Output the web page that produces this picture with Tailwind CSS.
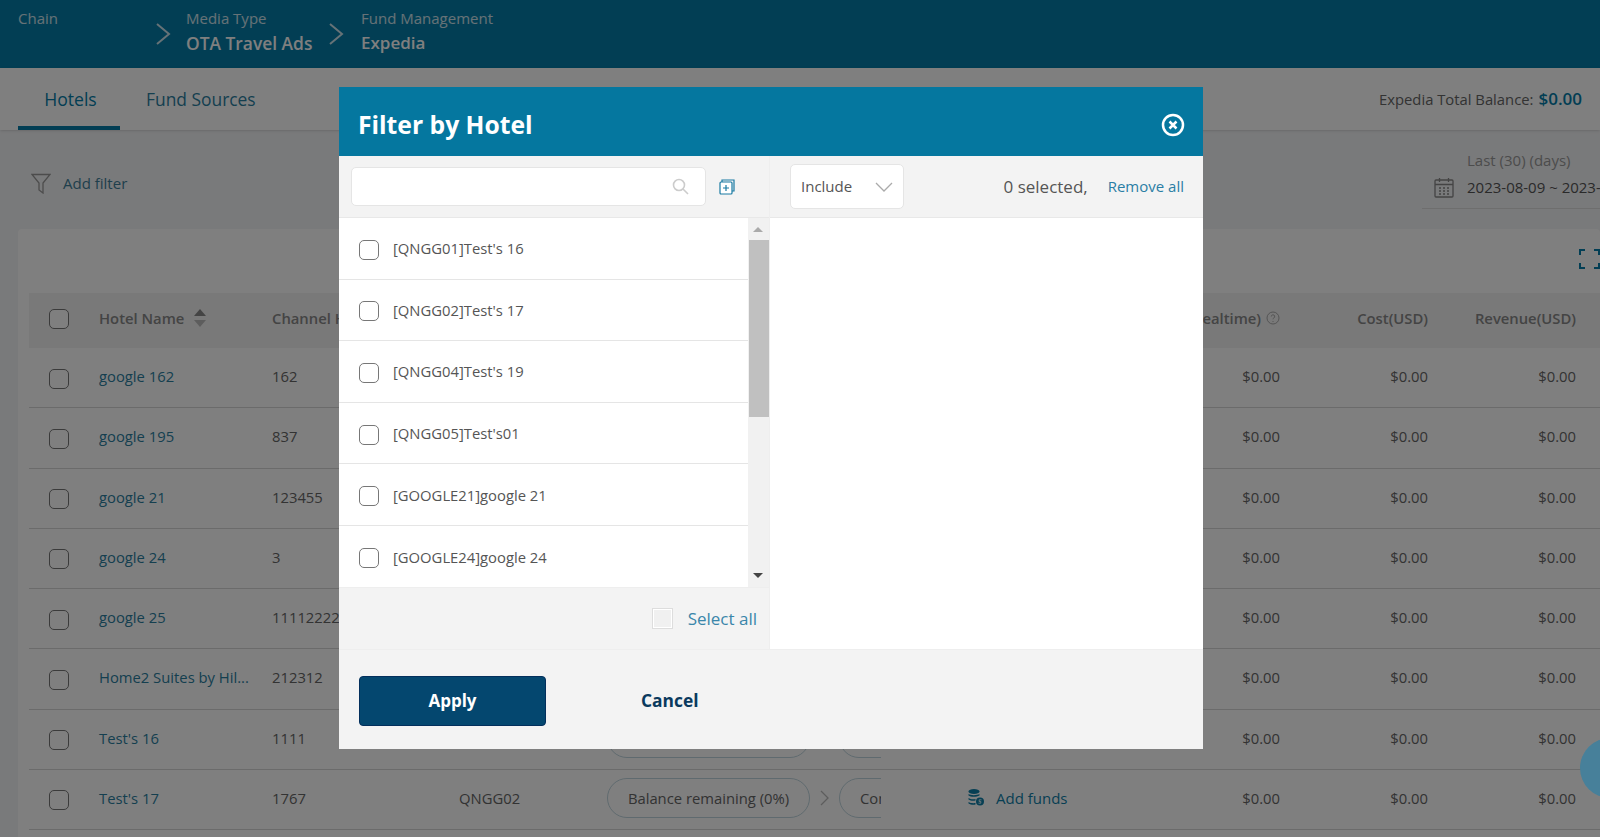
<!DOCTYPE html>
<html lang="en">
<head>
  <meta charset="UTF-8">
  <title>Fund Management</title>
  <script src="https://cdn.jsdelivr.net/npm/@tailwindcss/browser@4"></script>
</head>
<body class="h-[837px] overflow-hidden bg-[#f3f4f6] font-['Open_Sans',sans-serif] text-[14.8px] text-[#666]">

  <!-- Breadcrumb -->
  <header class="flex h-[68px] whitespace-nowrap bg-[#047ca8] text-white">
    <div class="w-[155px] pl-[18px] pt-[7px] text-[15px] text-white/80">Chain</div>
    <svg class="mt-[22px] h-[24px] w-[16px]" viewBox="0 0 16 24" fill="none" stroke="#fff" stroke-opacity=".8" stroke-width="2"><path d="M2 2l12 10L2 22"/></svg>
    <div class="w-[157px] pl-[15px] pt-[7px]">
      <div class="text-[15px] text-white/80">Media Type</div>
      <div class="text-[17.4px] font-semibold">OTA Travel Ads</div>
    </div>
    <svg class="mt-[22px] h-[24px] w-[16px]" viewBox="0 0 16 24" fill="none" stroke="#fff" stroke-opacity=".8" stroke-width="2"><path d="M2 2l12 10L2 22"/></svg>
    <div class="pl-[17px] pt-[7px]">
      <div class="text-[15px] text-white/80">Fund Management</div>
      <div class="text-[17px] font-semibold">Expedia</div>
    </div>
  </header>

  <!-- Tabs -->
  <nav class="flex h-[62px] items-stretch bg-white pl-[18px] pr-[18px] shadow-sm">
    <div class="flex w-[102px] items-center justify-center border-b-4 border-[#047ca8] pl-[3px] pt-[4px] text-[17.6px] text-[#047ca8]">Hotels</div>
    <div class="ml-[26px] flex items-center text-[17.4px] text-[#2b7f9f]">Fund Sources</div>
    <div class="ml-auto flex items-center gap-[5px] text-[#666]">Expedia Total Balance: <span class="text-[17px] font-semibold text-[#047ca8]">$0.00</span></div>
  </nav>

  <!-- Filters -->
  <section class="flex h-[99px] pl-[31px]">
    <div class="mt-[43px] flex h-[20px] items-center gap-[12px] text-[15px] text-[#3f7f99]">
      <svg class="h-[21px] w-[20px]" viewBox="0 0 20 21" fill="none" stroke="#999" stroke-width="1.3"><path d="M1 1.5h18l-7 8.5v10l-4-3v-7z"/></svg>
      Add filter
    </div>
    <div class="ml-auto h-[79px] w-[178px] shrink-0 overflow-hidden border-b border-[#ddd] pt-[21px] text-[15px]">
      <div class="pl-[45px] leading-[19px] text-[#999]">Last (30) (days)</div>
      <div class="mt-[6px] flex items-center gap-[13px] whitespace-nowrap pl-[12px] text-[#555]">
        <svg class="h-[21px] w-[20px] shrink-0" viewBox="0 0 20 21" fill="none" stroke="#888" stroke-width="1.3"><rect x="1" y="3" width="18" height="17" rx="1"/><path d="M1 7.5h18M5.500 1v4M14.500 1v4M5 11h2M9 11h2M13 11h2M5 14h2M9 14h2M13 14h2M5 17h2M9 17h2M13 17h2"/></svg>
        2023-08-09 ~ 2023-09-07
      </div>
    </div>
  </section>

  <!-- Table card -->
  <main class="ml-[18px] h-[608px] overflow-hidden rounded-t bg-white pl-[11px]">
    <div class="flex h-[64px] justify-end pt-[20px]">
      <svg class="h-[20px] w-[21px]" viewBox="0 0 21 20" fill="none" stroke="#047ca8" stroke-width="2"><path d="M1 6V1h5M15 1h5v5M1 14v5h5M15 19h5v-5"/></svg>
    </div>
    <div class="grid h-[55px] grid-cols-[70px_173px_187px_138px_284px_399px_148px_148px] items-center bg-[#f2f2f2] pb-[5px] font-semibold text-[#888]">
      <span class="ml-[20px] mt-[2px] h-[20px] w-[20px] rounded-[5px] border-[1.5px] border-[#777] bg-white"></span>
      <div class="flex items-center gap-[10px]">Hotel Name
        <svg class="h-[18px] w-[12px]" viewBox="0 0 12 18"><path fill="#888" d="M6 0l6 7H0z"/><path fill="#bbb" d="M0 11h12l-6 7z"/></svg>
      </div>
      <div class="whitespace-nowrap">Channel Hotel ID</div>
      <div>Hotel Code</div>
      <div></div>
      <div class="flex items-center justify-end gap-[5px]">Balance(Realtime)
        <svg class="h-[14px] w-[14px]" viewBox="0 0 14 14" fill="none" stroke="#aaa"><circle cx="7" cy="7" r="6"/><path d="M5.300 5.500a1.700 1.700 0 1 1 2.500 1.500c-.6.3-.8.700-.8 1.300M7 10v1"/></svg>
      </div>
      <div class="text-right">Cost(USD)</div>
      <div class="text-right">Revenue(USD)</div>
    </div>
    <div id="rows"></div>
  </main>

  <!-- Modal -->
  <div class="fixed inset-0 bg-black/50"></div>
  <div class="fixed left-[1580px] top-[738px] h-[60px] w-[60px] rounded-full bg-[#47809a]"></div>
  <div class="fixed left-[339px] top-[87px] flex h-[662px] w-[864px] flex-col bg-white">
    <div class="flex h-[69px] shrink-0 items-center justify-between bg-[#05779f] pl-[19px] pr-[18px] pt-[6px]">
      <h2 class="text-[24.7px] font-bold text-white">Filter by Hotel</h2>
      <svg class="h-[24px] w-[24px]" viewBox="0 0 24 24" fill="none" stroke="#fff" stroke-width="2.500"><circle cx="12" cy="12" r="10"/><path d="M8.500 8.500l7 7M15.500 8.500l-7 7"/></svg>
    </div>

    <div class="flex min-h-0 flex-1">
      <!-- Left pane -->
      <div class="flex w-[431px] shrink-0 flex-col border-r border-[#eee]">
        <div class="flex h-[62px] shrink-0 items-center border-b border-[#e8e8e8] bg-[#f3f3f3] pl-[12px]">
          <div class="flex h-[39px] w-[355px] items-center justify-end rounded-[5px] border border-[#e5e5e5] bg-white pr-[16px]">
            <svg class="h-[17px] w-[17px]" viewBox="0 0 17 17" fill="none" stroke="#ccc" stroke-width="1.600"><circle cx="7" cy="7" r="5.500"/><path d="M11 11l5 5"/></svg>
          </div>
          <svg class="ml-[13px] h-[16px] w-[16px]" viewBox="0 0 16 16" fill="none" stroke="#1a7ba3" stroke-width="1.200"><path d="M3 3V1h12v11h-2"/><rect x="1" y="3" width="12" height="12" rx="1" fill="#fff"/><path d="M7 6v6M4 9h6"/></svg>
        </div>
        <div class="flex h-[369px] shrink-0">
          <ul id="hotels" class="h-[369px] w-[409px] overflow-hidden"></ul>
          <div class="relative w-[21px] bg-[#f1f1f1]">
            <span class="absolute left-[5px] top-[9px] border-x-[5px] border-b-[5px] border-x-transparent border-b-[#aaa]"></span>
            <div class="absolute left-[1px] top-[22px] h-[177px] w-[20px] bg-[#c0c0c0]"></div>
            <span class="absolute bottom-[9px] left-[5px] border-x-[5px] border-t-[5px] border-x-transparent border-t-[#444]"></span>
          </div>
        </div>
        <div class="flex flex-1 items-center justify-end gap-[15px] border-t border-[#eee] bg-[#f3f3f3] pr-[12px]">
          <span class="h-[21px] w-[21px] border border-[#ddd] bg-[#f0f0f0] outline outline-white -outline-offset-2"></span>
          <span class="text-[17px] text-[#3a86aa]">Select all</span>
        </div>
      </div>

      <!-- Right pane -->
      <div class="flex-1">
        <div class="flex h-[62px] items-center border-b border-[#e8e8e8] bg-[#f3f3f3] pl-[20px] pr-[19px]">
          <div class="flex h-[45px] w-[114px] items-center justify-between rounded-[5px] border border-[#e5e5e5] bg-white pl-[10px] pr-[10px] text-[15px] text-[#555]">
            Include
            <svg class="h-[10px] w-[18px]" viewBox="0 0 18 10" fill="none" stroke="#aaa" stroke-width="1.300"><path d="M1 1l8 8 8-8"/></svg>
          </div>
          <span class="ml-auto text-[17px] text-[#555]">0 selected,</span>
          <span class="ml-[20px] text-[15px] text-[#2a7ea5]">Remove all</span>
        </div>
      </div>
    </div>

    <div class="flex h-[100px] shrink-0 items-center border-t border-[#eee] bg-[#f3f3f3] pl-[20px] pt-[2px]">
      <button class="h-[50px] w-[187px] rounded border border-[#032f5c] bg-[#04476f] text-[17px] font-bold text-white">Apply</button>
      <button class="ml-[95px] text-[17.4px] font-bold text-[#0a3a5e]">Cancel</button>
    </div>
  </div>

  <script>
    const rows = [
      ["google 162", "162", "GOOGLE162"],
      ["google 195", "837", "GOOGLE195"],
      ["google 21", "123455", "GOOGLE21"],
      ["google 24", "3", "GOOGLE24"],
      ["google 25", "11112222", "GOOGLE25"],
      ["Home2 Suites by Hil...", "212312", "HOME2"],
      ["Test's 16", "1111", "QNGG01"],
      ["Test's 17", "1767", "QNGG02"]
    ];
    document.getElementById("rows").innerHTML = rows.map(r => `
      <div class="grid h-[60.25px] grid-cols-[70px_173px_187px_138px_284px_399px_148px_148px] items-center border-b border-[#d6d6d6] pb-[3px]">
        <span class="ml-[20px] mt-[5px] h-[20px] w-[20px] rounded-[5px] border-[1.5px] border-[#777] bg-white"></span>
        <div class="whitespace-nowrap text-[#2b7f9f]">${r[0]}</div>
        <div>${r[1]}</div>
        <div>${r[2]}</div>
        <div class="flex items-center overflow-hidden whitespace-nowrap pl-[10px]">
          <span class="flex h-[40px] w-[203px] shrink-0 items-center justify-center rounded-full border border-[#bfd5de]">Balance remaining (0%)</span>
          <svg class="mx-[10px] h-[16px] w-[9px] shrink-0" viewBox="0 0 9 16" fill="none" stroke="#bbb" stroke-width="1.300"><path d="M1 1l7 7-7 7"/></svg>
          <span class="flex h-[40px] shrink-0 items-center rounded-full border border-[#bfd5de] px-[20px]">Complete</span>
        </div>
        <div class="flex items-center pl-[87px]">
          <svg class="h-[17px] w-[16px]" viewBox="0 0 16 17" fill="#0f7fa8"><ellipse cx="6" cy="2.500" rx="5.500" ry="2.500"/><path d="M.5 5c2 1.500 8.500 1.500 11 0v1.500c-3 1.800-9 1.800-11 0zM.5 9c2 1.500 5 1.500 7 1v1.500c-2 .5-5 .5-7-1zM.5 13c2 1.300 5 1.300 7 1v1.500c-2 .5-5 .3-7-1z"/><circle cx="12" cy="12.500" r="4"/><path d="M13.500 10.800h-2.300v1.700h1.600v1.700h-2.300" fill="none" stroke="#fff" stroke-width=".8"/></svg>
          <span class="ml-[12px] text-[15px] font-medium text-[#0f7fa8]">Add funds</span>
          <span class="ml-auto">$0.00</span>
        </div>
        <div class="text-right">$0.00</div>
        <div class="text-right">$0.00</div>
      </div>`).join("");

    const hotels = ["[QNGG01]Test's 16", "[QNGG02]Test's 17", "[QNGG04]Test's 19", "[QNGG05]Test's01", "[GOOGLE21]google 21", "[GOOGLE24]google 24"];
    document.getElementById("hotels").innerHTML = hotels.map((h, i) => `
      <li class="flex h-[61.6px] items-center gap-[14px] border-[#e5e5e5] pl-[20px] pt-[2px] text-[#555] ${i < 5 ? "border-b" : ""}">
        <span class="mt-[1px] h-[20px] w-[20px] rounded-[5px] border-[1.5px] border-[#777] bg-white"></span>
        <span class="-mt-[2px]">${h}</span>
      </li>`).join("");
  </script>
</body>
</html>
